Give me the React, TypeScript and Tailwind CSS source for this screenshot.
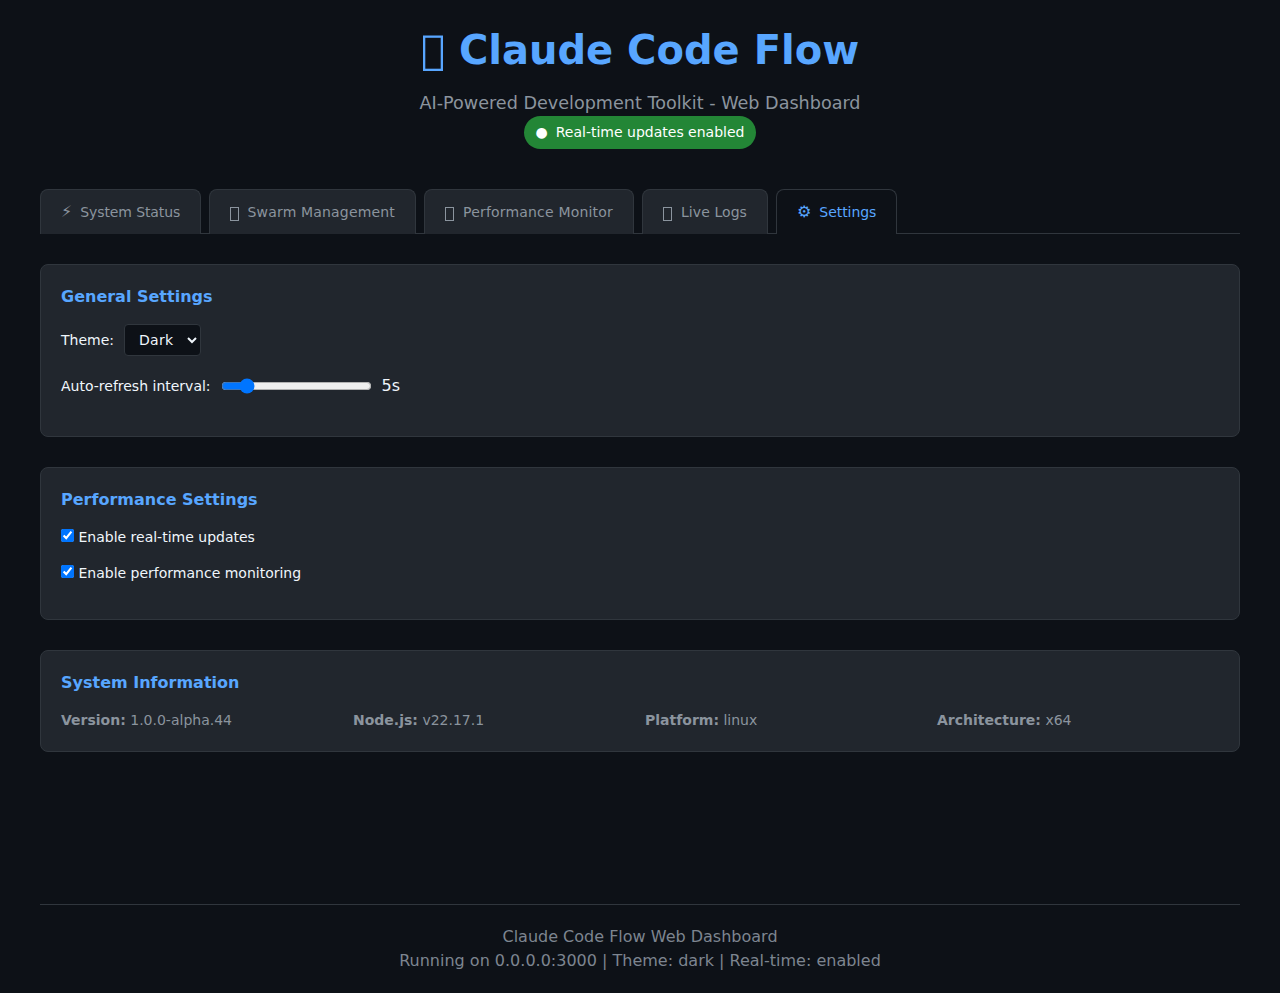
import { useState } from 'react';
import type { ReactNode } from 'react';

const tabs = [
  { icon: '⚡', label: 'System Status', width: 'w-[161px]', tracking: 'tracking-[-0.1px]' },
  { icon: null, label: 'Swarm Management', width: 'w-[207px]', tracking: 'tracking-[0.17px]' },
  { icon: null, label: 'Performance Monitor', width: 'w-[210px]', tracking: 'tracking-[0.19px]' },
  { icon: null, label: 'Live Logs', width: 'w-[126px]', tracking: 'tracking-[0.08px]' },
  { icon: '⚙', label: 'Settings', width: 'w-[121px]', tracking: 'tracking-[-0.05px]' },
];

const systemInfo = [
  { label: 'Version', value: '1.0.0-alpha.44' },
  { label: 'Node.js', value: 'v22.17.1' },
  { label: 'Platform', value: 'linux' },
  { label: 'Architecture', value: 'x64' },
];

function Card({ title, children }: { title: string; children: ReactNode }) {
  return (
    <section className="mb-[30px] rounded-lg border border-[#30363d] bg-[#21262d] p-5">
      <h3 className="mb-[15px] text-base font-bold text-[#58a6ff]">{title}</h3>
      {children}
    </section>
  );
}

function CheckboxRow({ label }: { label: string }) {
  const [checked, setChecked] = useState(true);
  return (
    <label className="mb-[15px] block h-[21px] text-sm leading-[21px]">
      <input
        type="checkbox"
        checked={checked}
        onChange={(e) => setChecked(e.target.checked)}
        className="h-[13px] w-[13px]"
      />{' '}
      {label}
    </label>
  );
}

export default function App() {
  const [active, setActive] = useState('Settings');
  const [interval, setInterval] = useState(5);

  return (
    <div className="flex min-h-screen flex-col bg-[#0d1117] px-10 py-5 font-['DejaVu_Sans',sans-serif] text-base text-[#f0f6fc]">
      <header className="mb-10 flex flex-col items-center">
        <h1 className="mb-2.5 flex text-[40px] leading-[60px] font-bold text-[#58a6ff]">
          <svg className="mt-[15px] mr-[15px] ml-0.5 h-9 w-[21px]" viewBox="0 0 21 36" fill="none">
            <rect x="1.15" y="1.65" width="17.7" height="33.2" stroke="currentColor" strokeWidth="2.3" />
          </svg>
          <span>Claude Code Flow</span>
        </h1>
        <p className="text-[17.6px] leading-[26px] text-[#8b949e]">AI-Powered Development Toolkit - Web Dashboard</p>
        <div className="flex h-[33px] items-center gap-2 rounded-[20px] bg-[#238636] px-3 text-sm leading-[21px] text-white">
          <span>●</span>
          <span>Real-time updates enabled</span>
        </div>
      </header>

      <nav className="mb-[30px] flex h-[45px] gap-2 border-b border-[#30363d]">
        {tabs.map((tab) => (
          <button
            key={tab.label}
            onClick={() => setActive(tab.label)}
            className={`flex h-[45px] shrink-0 items-center gap-2 rounded-t-lg border border-b-0 border-[#30363d] px-5 text-sm whitespace-nowrap ${tab.width} ${
              active === tab.label ? 'bg-[#0d1117] text-[#58a6ff]' : 'bg-[#21262d] text-[#8b949e]'
            }`}
          >
            {tab.icon ? (
              <span className="text-base">{tab.icon}</span>
            ) : (
              <span className="flex w-2.5">
                <span className="mt-1 h-[14px] w-[9px] shrink-0 border border-[#8b949e]" />
              </span>
            )}
            <span className={tab.tracking}>{tab.label}</span>
          </button>
        ))}
      </nav>

      <main className="flex-1">
        <Card title="General Settings">
          <div className="mb-[15px] flex h-8 items-center gap-2.5">
            <label htmlFor="theme" className="text-sm">Theme:</label>
            <select
              id="theme"
              defaultValue="dark"
              className="h-8 w-[77px] rounded border border-[#30363d] bg-[#0d1117] px-2.5 text-sm tracking-[0.25px] text-[#f0f6fc]"
            >
              <option value="dark">Dark</option>
              <option value="light">Light</option>
            </select>
          </div>
          <div className="mb-[15px] flex h-[30px] items-center gap-2.5">
            <label htmlFor="interval" className="text-sm">Auto-refresh interval:</label>
            <input
              id="interval"
              type="range"
              min={1}
              max={30}
              value={interval}
              onChange={(e) => setInterval(Number(e.target.value))}
              className="h-4 w-[151px]"
            />
            <span>{interval}s</span>
          </div>
        </Card>

        <Card title="Performance Settings">
          <CheckboxRow label="Enable real-time updates" />
          <CheckboxRow label="Enable performance monitoring" />
        </Card>

        <Card title="System Information">
          <div className="grid grid-cols-4 gap-2.5 text-sm leading-[21px] text-[#8b949e]">
            {systemInfo.map((item) => (
              <div key={item.label}>
                <strong>{item.label}:</strong> {item.value}
              </div>
            ))}
          </div>
        </Card>
      </main>

      <footer className="border-t border-[#30363d] pt-5 text-center leading-6 text-[#7d8590]">
        <p>Claude Code Flow Web Dashboard</p>
        <p>Running on 0.0.0.0:3000 | Theme: dark | Real-time: enabled</p>
      </footer>
    </div>
  );
}
